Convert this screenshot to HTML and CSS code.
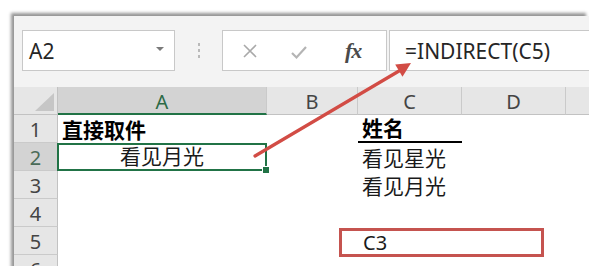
FILE: index.html
```html
<!DOCTYPE html>
<html lang="zh-CN">
<head>
<meta charset="utf-8">
<title>INDIRECT</title>
<link rel="stylesheet" href="styles.css">
</head>
<body>
<div class="frame">
  <div class="fbar">
    <div class="namebox"><span class="ref">A2</span><span class="caret"></span></div>
    <div class="grip"><i></i><i></i><i></i></div>
    <div class="btns">
      <svg class="ico" width="16" height="16" viewBox="0 0 16 16"><path d="M2 2L14 14M14 2L2 14" stroke="#a9a9a9" stroke-width="1.6" fill="none"/></svg>
      <svg class="ico" width="18" height="16" viewBox="0 0 18 16"><path d="M2 9L6.5 13.5L16 3" stroke="#b4b4b4" stroke-width="2.2" fill="none"/></svg>
      <span class="fx">fx</span>
    </div>
    <div class="formula">=INDIRECT(C5)</div>
  </div>
  <div class="grid">
    <div class="corner"><span class="tri"></span></div>
    <div class="ch sel">A</div>
    <div class="ch">B</div>
    <div class="ch">C</div>
    <div class="ch">D</div>
    <div class="ch last"></div>

    <div class="rh">1</div>
    <div class="cell bold">直接取件</div>
    <div class="cell"></div>
    <div class="cell bold uline">姓名</div>
    <div class="cell"></div>
    <div class="cell"></div>

    <div class="rh sel">2</div>
    <div class="cell active center">看见月光<span class="handle"></span></div>
    <div class="cell"></div>
    <div class="cell">看见星光</div>
    <div class="cell"></div>
    <div class="cell"></div>

    <div class="rh">3</div>
    <div class="cell"></div>
    <div class="cell"></div>
    <div class="cell">看见月光</div>
    <div class="cell"></div>
    <div class="cell"></div>

    <div class="rh">4</div>
    <div class="cell"></div>
    <div class="cell"></div>
    <div class="cell"></div>
    <div class="cell"></div>
    <div class="cell"></div>

    <div class="rh">5</div>
    <div class="cell"></div>
    <div class="cell"></div>
    <div class="cell latin">C3</div>
    <div class="cell"></div>
    <div class="cell"></div>

    <div class="rh">6</div>
    <div class="cell"></div>
    <div class="cell"></div>
    <div class="cell"></div>
    <div class="cell"></div>
    <div class="cell"></div>
  </div>
</div>
<div class="callout"></div>
<svg class="arrow" width="589" height="266" viewBox="0 0 589 266">
  <line x1="255" y1="156" x2="399" y2="71" stroke="#d24c45" stroke-width="3.2" stroke-linecap="round"/>
  <polygon points="411,63 402.5,76.8 395.2,64.6" fill="#d24c45"/>
</svg>
</body>
</html>
```

FILE: styles.css
```css
html, body {
  margin: 0;
  padding: 0;
  background: #ffffff;
}
body {
  width: 589px;
  height: 266px;
  overflow: hidden;
  position: relative;
  font-family: "Noto Sans", "Noto Sans CJK SC", sans-serif;
}
.frame {
  margin: 16px 0 0 14px;
  width: 575px;
  height: 262px;
  background: #f3f3f3;
  box-shadow: -3px -3px 3px rgba(0, 0, 0, 0.42);
  overflow: hidden;
}
.fbar {
  display: flex;
  height: 41px;
  padding-top: 14px;
}
.namebox {
  box-sizing: border-box;
  margin-left: 8px;
  width: 153px;
  background: #fff;
  border: 1px solid #c8c8c8;
  display: flex;
  align-items: center;
  justify-content: space-between;
  padding: 0 10px 0 6px;
}
.ref {
  font-size: 21px;
  color: #262626;
  font-family: "Noto Sans", sans-serif;
}
.caret {
  width: 0;
  height: 0;
  border-left: 4px solid transparent;
  border-right: 4px solid transparent;
  border-top: 4px solid #7a7a7a;
  margin-bottom: 4px;
}
.grip {
  width: 47px;
  display: flex;
  flex-direction: column;
  align-items: center;
  justify-content: center;
  gap: 3px;
}
.grip i {
  display: block;
  width: 2px;
  height: 3px;
  background: #b9b9b9;
}
.btns {
  box-sizing: border-box;
  width: 165px;
  background: #fff;
  border: 1px solid #c8c8c8;
  display: flex;
  align-items: center;
  padding-left: 19px;
}
.btns .ico:nth-child(1) {
  margin-right: 32px;
}
.btns .ico:nth-child(2) {
  margin-right: 37px;
  margin-top: 2px;
}
.fx {
  font-family: "Liberation Serif", "DejaVu Serif", serif;
  font-style: italic;
  font-weight: 700;
  font-size: 22px;
  color: #4a4a4a;
  letter-spacing: -1px;
}
.formula {
  box-sizing: border-box;
  flex: 1;
  margin-left: 2px;
  margin-right: -1px;
  background: #fff;
  border: 1px solid #c8c8c8;
  display: flex;
  align-items: center;
  padding-left: 15px;
  font-size: 21px;
  color: #262626;
}
.grid {
  margin-top: 16px;
  display: grid;
  grid-template-columns: 44px 209px 91px 104px 104px 1fr;
  grid-template-rows: repeat(7, 28px);
  background: #fff;
}
.corner {
  box-sizing: border-box;
  background: #e6e6e6;
  border-bottom: 1px solid #c2c2c2;
  border-right: 1px solid #c2c2c2;
  position: relative;
}
.tri {
  position: absolute;
  right: 3px;
  bottom: 3px;
  width: 0;
  height: 0;
  border-left: 19px solid transparent;
  border-bottom: 18px solid #c6c6c6;
}
.ch {
  box-sizing: border-box;
  background: #e6e6e6;
  border-right: 1px solid #cacaca;
  border-bottom: 1px solid #c2c2c2;
  display: flex;
  align-items: center;
  justify-content: center;
  font-size: 20px;
  color: #444;
  padding-top: 2px;
}
.ch.sel {
  background: #d3d3d3;
  border-bottom: 2px solid #217346;
  color: #2c6a45;
}
.ch.last {
  border-right: none;
}
.rh {
  box-sizing: border-box;
  background: #e6e6e6;
  border-right: 1px solid #c2c2c2;
  border-bottom: 1px solid #cacaca;
  display: flex;
  align-items: center;
  justify-content: center;
  font-size: 20px;
  color: #444;
  padding-top: 2px;
}
.rh.sel {
  background: #d3d3d3;
  color: #4a6b57;
}
.cell {
  box-sizing: border-box;
  display: flex;
  align-items: flex-end;
  padding: 0 4px 0 4px;
  font-family: "Noto Sans CJK SC", "Noto Sans", sans-serif;
  font-size: 21px;
  line-height: 27px;
  color: #1a1a1a;
  position: relative;
  white-space: nowrap;
}
.cell.bold {
  font-weight: 700;
  color: #000;
}
.cell.uline {
  border-bottom: 2px solid #000;
}
.cell.center {
  justify-content: center;
}
.cell.active {
  border: 2px solid #217346;
  margin-left: -1px;
}
.cell.latin {
  font-family: "Noto Sans", sans-serif;
  font-size: 20px;
  padding-left: 5px;
  padding-bottom: 0;
  line-height: 24px;
}
.handle {
  position: absolute;
  right: -5px;
  bottom: -5px;
  width: 6px;
  height: 6px;
  background: #217346;
  border: 1px solid #fff;
}
.callout {
  position: absolute;
  left: 339px;
  top: 228px;
  width: 205px;
  height: 29px;
  box-sizing: border-box;
  border: 3px solid #c5534f;
}
.arrow {
  position: absolute;
  left: 0;
  top: 0;
  pointer-events: none;
}
```
